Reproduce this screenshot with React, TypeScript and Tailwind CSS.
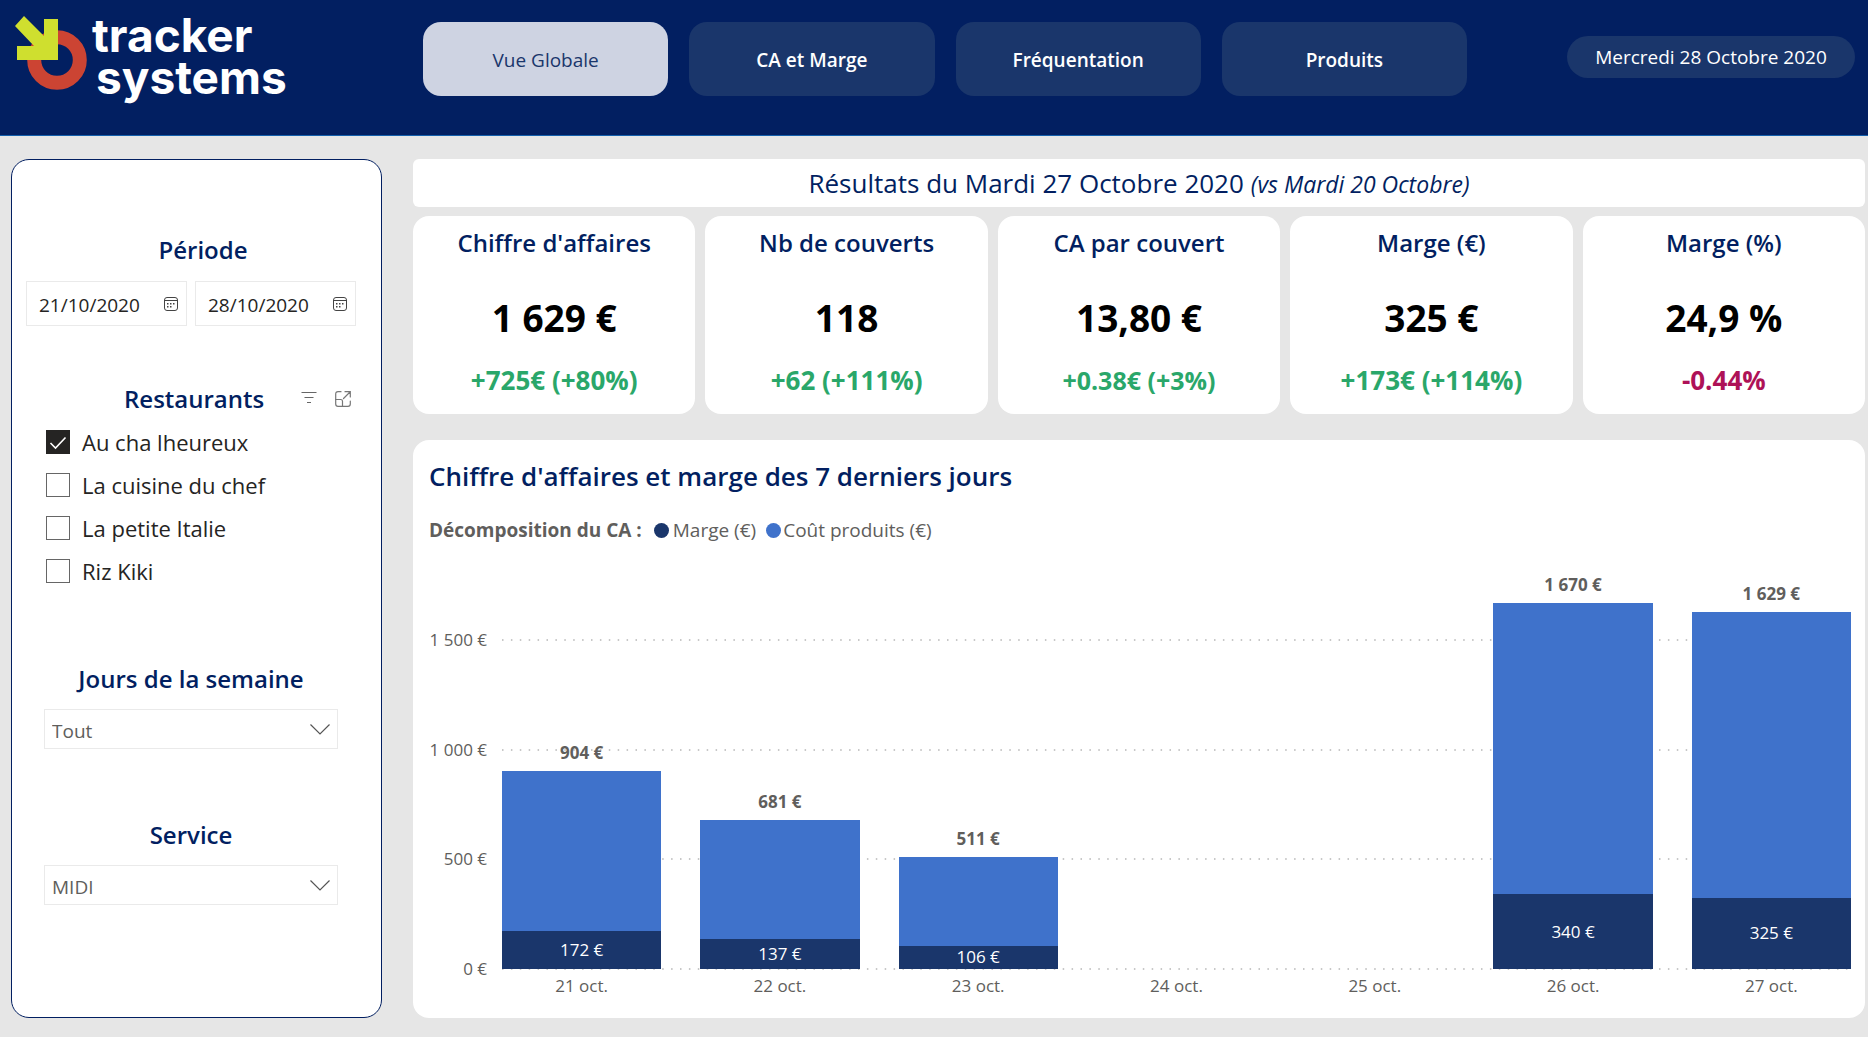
import { useState } from "react";

const TABS = ["Vue Globale", "CA et Marge", "Fréquentation", "Produits"];

const GAIN = "mt-5 text-[26px] font-bold leading-9 text-[#2aa76a]";
const GAIN_COMPACT = "mt-5 text-[25px] font-bold leading-9 text-[#2aa76a]";
const LOSS = "mt-5 text-[26px] font-bold leading-9 text-[#ae1257]";

const KPIS = [
  { title: "Chiffre d'affaires", value: "1 629 €", delta: "+725€ (+80%)", style: GAIN },
  { title: "Nb de couverts", value: "118", delta: "+62 (+111%)", style: GAIN },
  { title: "CA par couvert", value: "13,80 €", delta: "+0.38€ (+3%)", style: GAIN_COMPACT },
  { title: "Marge (€)", value: "325 €", delta: "+173€ (+114%)", style: GAIN },
  { title: "Marge (%)", value: "24,9 %", delta: "-0.44%", style: LOSS },
];

const DAYS = [
  { day: "21 oct.", total: 904, margin: 172 },
  { day: "22 oct.", total: 681, margin: 137 },
  { day: "23 oct.", total: 511, margin: 106 },
  { day: "24 oct.", total: 0, margin: 0 },
  { day: "25 oct.", total: 0, margin: 0 },
  { day: "26 oct.", total: 1670, margin: 340 },
  { day: "27 oct.", total: 1629, margin: 325 },
];

const AXIS_MAX = 1700;
const TICKS = [0, 500, 1000, 1500];

const euros = (n: number) => `${String(n).replace(/\B(?=(\d{3})+$)/g, " ")} €`;
const percent = (n: number) => `${(n / AXIS_MAX) * 100}%`;

function Logo() {
  return (
    <div className="flex w-[340px] shrink-0 items-start pl-3 pt-3">
      <svg viewBox="12 12 78 80" className="h-20 w-[78px]" aria-hidden="true">
        <circle cx="57" cy="60" r="22.8" fill="none" stroke="#cc4433" strokeWidth="14" />
        <path d="M44 19h14v41H17V46h17L15 26l9-10 20 20z" fill="#cfdf2f" />
      </svg>
      <p className="pl-0.5 pt-0.5 font-['Inter'] text-[46px] font-bold leading-[42px] text-white">
        <span className="block">tracker</span>
        <span className="block pl-1">systems</span>
      </p>
    </div>
  );
}

function CalendarIcon() {
  return (
    <svg viewBox="0 0 14 14" className="size-3.5 shrink-0" fill="none" stroke="#444" aria-hidden="true">
      <rect x="0.5" y="0.5" width="13" height="13" rx="2.5" />
      <path d="M0.5 3.5h13" />
      <g fill="#444" stroke="none">
        <rect x="6" y="6" width="1.5" height="1.5" />
        <rect x="9" y="6" width="1.5" height="1.5" />
        <rect x="3" y="9" width="1.5" height="1.5" />
        <rect x="6" y="9" width="1.5" height="1.5" />
        <rect x="3" y="6" width="1.5" height="1.5" />
      </g>
    </svg>
  );
}

function DateField({ label, initial }: { label: string; initial: string }) {
  const [value, setValue] = useState(initial);
  return (
    <label className="flex h-[45px] min-w-0 flex-1 items-center border border-[#eaeaea] pl-3 pr-2">
      <input
        aria-label={label}
        value={value}
        onChange={(e) => setValue(e.target.value)}
        className="min-w-0 flex-1 pt-1 text-[19px] text-[#252423] outline-none"
      />
      <CalendarIcon />
    </label>
  );
}

function Restaurant({ name, initial }: { name: string; initial?: boolean }) {
  const [checked, setChecked] = useState(!!initial);
  return (
    <label className="flex h-[43px] items-center gap-3 text-[22px] text-[#252423]">
      <span className="grid size-6 shrink-0">
        <input
          type="checkbox"
          checked={checked}
          onChange={(e) => setChecked(e.target.checked)}
          className="col-start-1 row-start-1 size-6 appearance-none border border-[#666] bg-white checked:border-[#252423] checked:bg-[#252423]"
        />
        {checked && (
          <svg viewBox="0 0 24 24" className="pointer-events-none col-start-1 row-start-1 size-6" fill="none" stroke="#fff" strokeWidth="1.6" aria-hidden="true">
            <path d="M4.5 13l5 5L19.5 7.500" />
          </svg>
        )}
      </span>
      <span className="pt-0.5">{name}</span>
    </label>
  );
}

function Dropdown({ id, title, options }: { id: string; title: string; options: string[] }) {
  return (
    <section className="w-[294px]">
      <label htmlFor={id} className="block text-center text-2xl font-semibold text-[#021f61]">
        {title}
      </label>
      <div className="mt-3.5 grid items-center">
        <select
          id={id}
          className="col-start-1 row-start-1 h-10 w-full appearance-none border border-[#eaeaea] bg-white pl-[7px] pt-1 text-[19px] text-[#605e5c] outline-none"
        >
          {options.map((o) => (
            <option key={o}>{o}</option>
          ))}
        </select>
        <svg viewBox="0 0 20 11" className="pointer-events-none col-start-1 row-start-1 mr-2 h-[11px] w-5 justify-self-end" fill="none" stroke="#555" strokeWidth="1.2" aria-hidden="true">
          <path d="M0.500 0.500L10 10l9.500-9.500" />
        </svg>
      </div>
    </section>
  );
}

function Sidebar() {
  return (
    <aside className="w-[371px] shrink-0 rounded-[18px] border border-[#021f61] bg-white pt-[74px]">
      <section className="pl-3.5 pr-[25px]">
        <h2 className="pl-6 text-center text-2xl font-semibold text-[#021f61]">Période</h2>
        <div className="mt-[15px] flex gap-2">
          <DateField label="Date de début" initial="21/10/2020" />
          <DateField label="Date de fin" initial="28/10/2020" />
        </div>
      </section>

      <section className="mt-[57px] pl-[34px] pr-[30px]">
        <div className="flex items-center">
          <h2 className="pl-[78px] text-2xl font-semibold text-[#021f61]">Restaurants</h2>
          <div className="ml-auto flex gap-[18px]">
            <button type="button" aria-label="Filtres">
              <svg viewBox="0 0 16 16" className="size-4" fill="none" stroke="#666" strokeWidth="1.1" aria-hidden="true">
                <path d="M0.500 1.500h15M3.500 6.500h9M6 11.500h4" />
              </svg>
            </button>
            <button type="button" aria-label="Mode focus">
              <svg viewBox="0 0 16 16" className="size-4" fill="none" stroke="#777" strokeWidth="1.2" strokeLinecap="round" aria-hidden="true">
                <path d="M6 0.700H3Q0.700 0.700 0.700 3v10Q0.700 15.300 3 15.300h10q2.300 0 2.300-2.300v-3" />
                <path d="M0.700 8.500h5q1.800 0 1.800 1.800v5M8.500 7.500l6.500-6.500M10 0.700h5.300V6" />
              </svg>
            </button>
          </div>
        </div>
        <div className="mt-[5px]">
          <Restaurant name="Au cha lheureux" initial />
          <Restaurant name="La cuisine du chef" />
          <Restaurant name="La petite Italie" />
          <Restaurant name="Riz Kiki" />
        </div>
      </section>

      <div className="mt-[71px] flex flex-col gap-[70px] pl-8">
        <Dropdown id="jours" title="Jours de la semaine" options={["Tout", "Lundi", "Mardi", "Mercredi", "Jeudi", "Vendredi", "Samedi", "Dimanche"]} />
        <Dropdown id="service" title="Service" options={["MIDI", "SOIR"]} />
      </div>
    </aside>
  );
}

function Chart() {
  return (
    <section className="mt-[26px] flex flex-1 flex-col rounded-2xl bg-white pb-5 pl-4 pr-3.5 pt-[18px]">
      <h2 className="text-[26px] font-semibold leading-9 text-[#021f61]">Chiffre d'affaires et marge des 7 derniers jours</h2>
      <div className="mt-6 flex items-center text-[19px] leading-6 text-[#605e5c]">
        <span className="font-bold">Décomposition du CA :</span>
        <span className="ml-3 size-[15px] rounded-full bg-[#1a366b]" />
        <span className="ml-1">Marge (€)</span>
        <span className="ml-2.5 size-[15px] rounded-full bg-[#3f72cb]" />
        <span className="ml-0.5">Coût produits (€)</span>
      </div>

      <div className="mt-[54px] flex flex-1">
        <div className="relative w-[58px] text-[17px] leading-6 text-[#605e5c]">
          {TICKS.map((t) => (
            <span key={t} className="absolute right-0 translate-y-1/2 whitespace-nowrap" style={{ bottom: percent(t) }}>
              {euros(t)}
            </span>
          ))}
        </div>
        <div className="relative ml-[15px] flex flex-1 items-end gap-[39px]">
          {TICKS.map((t) => (
            <svg key={t} className="absolute left-0 h-0.5 w-full translate-y-1/2" style={{ bottom: percent(t) }} aria-hidden="true">
              <line x1="0" y1="1" x2="100%" y2="1" stroke="#c8c8c8" strokeWidth="2" strokeDasharray="1.500 7.400" />
            </svg>
          ))}
          {DAYS.map((d) => (
            <div key={d.day} className="relative flex h-full flex-1 flex-col justify-end text-center text-[17px] leading-6">
              {d.total > 0 && (
                <>
                  <div className="-mt-8 pb-1.5 font-bold text-[#605e5c]">{euros(d.total)}</div>
                  <div className="bg-[#3f72cb]" style={{ height: percent(d.total - d.margin) }} />
                  <div className="flex items-center justify-center bg-[#1a366b] text-white" style={{ height: percent(d.margin) }}>
                    {euros(d.margin)}
                  </div>
                </>
              )}
            </div>
          ))}
        </div>
      </div>
      <div className="ml-[73px] mt-[5px] flex gap-[39px] text-center text-[17px] leading-6 text-[#605e5c]">
        {DAYS.map((d) => (
          <span key={d.day} className="flex-1">
            {d.day}
          </span>
        ))}
      </div>
    </section>
  );
}

export default function App() {
  const [tab, setTab] = useState(TABS[0]);
  return (
    <div className="flex min-h-screen flex-col bg-[#e6e6e6] font-['Open_Sans','Noto_Sans',sans-serif]">
      <header className="flex h-[136px] items-start border-b border-[#1460ad] bg-[#021f61]">
        <Logo />
        <nav className="ml-[83px] mt-[22px] flex max-w-[1044px] flex-1 gap-[21px]">
          {TABS.map((t) => (
            <button
              key={t}
              type="button"
              onClick={() => setTab(t)}
              className={
                t === tab
                  ? "h-[74px] flex-1 rounded-[18px] bg-[#ced3e2] pt-0.5 text-[19px] text-[#1a366b]"
                  : "h-[74px] flex-1 rounded-[18px] bg-[#1a366b] pt-0.5 text-[19px] font-semibold text-white"
              }
            >
              {t}
            </button>
          ))}
        </nav>
        <time dateTime="2020-10-28" className="ml-auto mr-[13px] mt-9 flex h-[42px] w-72 items-center justify-center rounded-full bg-[#1a366b] text-[19px] text-white">
          Mercredi 28 Octobre 2020
        </time>
      </header>

      <main className="flex flex-1 gap-[31px] pb-[19px] pl-[11px] pr-[3px] pt-[23px]">
        <Sidebar />
        <div className="flex min-w-0 flex-1 flex-col">
          <h1 className="flex h-12 items-baseline justify-center gap-[7px] rounded-md bg-white text-[26px] leading-[48px] text-[#021f61]">
            Résultats du Mardi 27 Octobre 2020 <em className="text-[23px]">(vs Mardi 20 Octobre)</em>
          </h1>
          <div className="mt-[9px] grid grid-cols-5 gap-2.5">
            {KPIS.map((k) => (
              <article key={k.title} className="flex h-[198px] flex-col items-center rounded-2xl bg-white pt-[9px]">
                <h2 className="text-2xl font-semibold leading-9 text-[#021f61]">{k.title}</h2>
                <p className="mt-[33px] text-[37px] font-bold leading-[48px] text-black">{k.value}</p>
                <p className={k.style}>{k.delta}</p>
              </article>
            ))}
          </div>
          <Chart />
        </div>
      </main>
    </div>
  );
}
